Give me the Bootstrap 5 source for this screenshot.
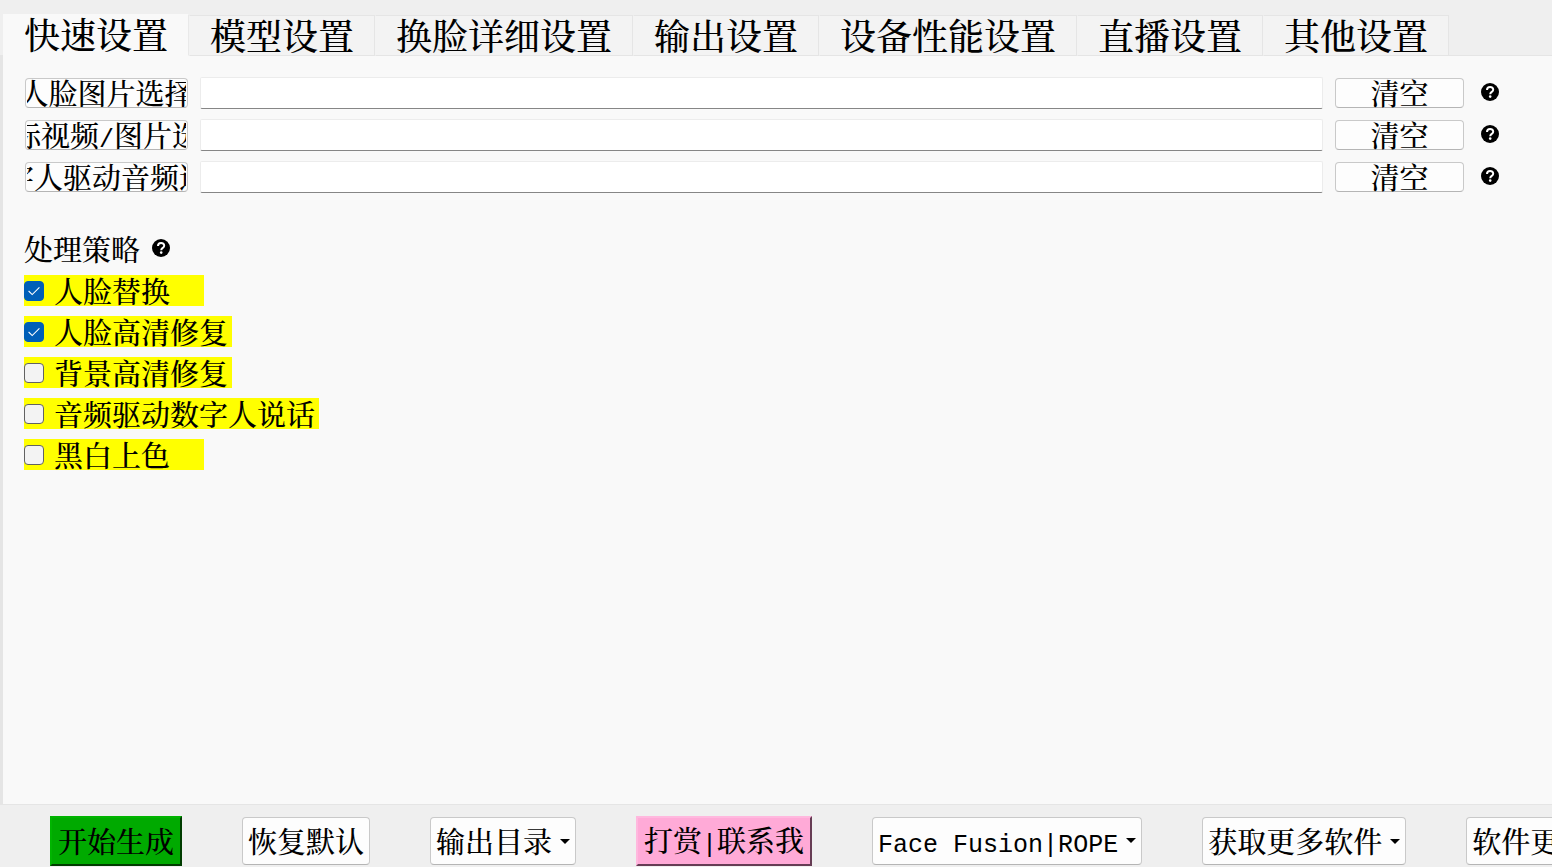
<!DOCTYPE html>
<html lang="zh-CN">
<head>
<meta charset="utf-8">
<meta name="viewport" content="width=device-width, initial-scale=1">
<title>快速设置</title>
<link href="https://cdn.jsdelivr.net/npm/bootstrap@5.3.0/dist/css/bootstrap.min.css" rel="stylesheet">
<style>
body{background:#efefef;color:#000;font-family:"Noto Serif CJK SC","Noto Sans CJK SC",serif;font-size:29px;font-weight:500;line-height:30px}
.half{font-family:"Liberation Mono",monospace;font-size:25px}
.top-tabs{padding:14px 0 0 3px;margin-bottom:-1px;border:0;z-index:1}
.top-tabs .nav-link{height:41px;padding:0 20px;margin:1px 0 0;border:1px solid #e5e5e5;border-left-color:transparent;border-radius:0;background:#f3f3f3;color:#000;font-size:36px;line-height:38px;white-space:nowrap}
.top-tabs .nav-link.active{height:42px;margin-top:0;background:#f9f9f9;color:#000;border-color:#f9f9f9;border-right-color:#e9e9e9}
.main-panel{background:#f9f9f9;border:1px solid #e5e5e5;border-width:1px 0 1px 3px;padding:21px 53px 0 21px;min-height:0}
.file-row{gap:12px;height:32px;margin-bottom:10px}
.soft-btn{background:#fdfdfd;color:#000;border:1px solid #c9c9c9;border-bottom-color:#b5b5b5;border-radius:4px;font-size:29px;font-weight:500;line-height:28px;padding:0;white-space:nowrap}
.soft-btn:hover{background:#f5f5f5;color:#000}
.pick-btn{width:163px;height:30px;padding:0 1px;margin-left:1px;flex:none}
.pick-btn .half{line-height:20px}
.clear-btn{width:129px;height:30px;flex:none}
.path-box{height:32px;min-width:0;background:#fff;border:1px solid #ececec;border-bottom-color:#868686;border-radius:2px;padding:0 6px;font-size:24px}
.help-mark{width:18px;height:18px;flex:none;margin-bottom:2px}
.file-row .help-mark{margin-left:5px}
.strategy{margin-top:41px}
.strategy-title{line-height:30px;margin-bottom:11px;gap:12px}
.options{gap:10px}
.option{height:31px;min-width:180px;padding-right:4px;background:#ff0;gap:10px;line-height:29px}
.option .form-check-input{width:20px;height:20px;margin:0;flex:none;border:1px solid #626262;border-radius:4px;background-color:#f3f3f3}
.option .form-check-input:checked{background-color:#005fb8;border-color:#005fb8;background-image:url("data:image/svg+xml,%3Csvg xmlns='http://www.w3.org/2000/svg' viewBox='0 0 20 20'%3E%3Cpath fill='none' stroke='%23fff' stroke-width='1.2' d='m4 10 4 4 8-8'/%3E%3C/svg%3E")}
.action-bar{gap:60px;padding:11px 0 1px 50px;overflow:hidden}
.action-bar .btn{flex:none;height:48px;font-size:29px;font-weight:500;line-height:44px;padding:0 5px;white-space:nowrap}
.action-bar .dropdown-toggle::after{margin-left:8px;vertical-align:9px;border-top:5px solid;border-left:5px solid transparent;border-right:5px solid transparent}
.action-bar .raised{height:50px;color:#000;border:2px solid;border-radius:0;padding:0 6px}
.action-bar .start{background:#00aa00;border-color:#00b400 #003c00 #003c00 #00b400}
.action-bar .donate{background:#ffaad7;border-color:#ffb8de #663c54 #663c54 #ffb8de}
</style>
</head>
<body class="vh-100 d-flex flex-column overflow-hidden">
<svg class="d-none" xmlns="http://www.w3.org/2000/svg">
<symbol id="help" viewBox="0 0 18 18"><circle cx="9" cy="9" r="9"/><path d="M6 7.1C6 2.9 12.2 3.1 12.2 6.7 12.2 8.9 9.2 8.9 9.2 11.2" fill="none" stroke="#fff" stroke-width="2"/><circle cx="9.2" cy="13.6" r="1.3" fill="#fff"/></symbol>
</svg>
<nav class="nav nav-tabs top-tabs flex-nowrap position-relative" aria-label="设置">
<a class="nav-link active" aria-current="page" href="#quick">快速设置</a>
<a class="nav-link" href="#model">模型设置</a>
<a class="nav-link" href="#swap">换脸详细设置</a>
<a class="nav-link" href="#output">输出设置</a>
<a class="nav-link" href="#device">设备性能设置</a>
<a class="nav-link" href="#live">直播设置</a>
<a class="nav-link" href="#other">其他设置</a>
</nav>
<main class="main-panel flex-grow-1 overflow-hidden" id="quick">
<div class="file-row d-flex align-items-center">
<button class="btn soft-btn pick-btn" type="button" id="face"><span class="d-flex justify-content-center overflow-hidden"><span>人脸图片选择</span></span></button>
<input class="form-control path-box flex-fill w-auto" type="text" aria-labelledby="face">
<button class="btn soft-btn clear-btn" type="button">清空</button>
<svg class="help-mark"><use href="#help"/></svg>
</div>
<div class="file-row d-flex align-items-center">
<button class="btn soft-btn pick-btn" type="button" id="target"><span class="d-flex justify-content-center overflow-hidden"><span>目标视频<span class="half">/</span>图片选择</span></span></button>
<input class="form-control path-box flex-fill w-auto" type="text" aria-labelledby="target">
<button class="btn soft-btn clear-btn" type="button">清空</button>
<svg class="help-mark"><use href="#help"/></svg>
</div>
<div class="file-row d-flex align-items-center">
<button class="btn soft-btn pick-btn" type="button" id="audio"><span class="d-flex justify-content-center overflow-hidden"><span>数字人驱动音频选择</span></span></button>
<input class="form-control path-box flex-fill w-auto" type="text" aria-labelledby="audio">
<button class="btn soft-btn clear-btn" type="button">清空</button>
<svg class="help-mark"><use href="#help"/></svg>
</div>
<section class="strategy">
<div class="strategy-title d-flex align-items-center"><span>处理策略</span><svg class="help-mark"><use href="#help"/></svg></div>
<div class="options d-flex flex-column align-items-start">
<label class="option d-flex align-items-center"><input class="form-check-input" type="checkbox" checked>人脸替换</label>
<label class="option d-flex align-items-center"><input class="form-check-input" type="checkbox" checked>人脸高清修复</label>
<label class="option d-flex align-items-center"><input class="form-check-input" type="checkbox">背景高清修复</label>
<label class="option d-flex align-items-center"><input class="form-check-input" type="checkbox">音频驱动数字人说话</label>
<label class="option d-flex align-items-center"><input class="form-check-input" type="checkbox">黑白上色</label>
</div>
</section>
</main>
<footer class="action-bar d-flex align-items-center">
<button class="btn raised start" type="button">开始生成</button>
<button class="btn soft-btn" type="button">恢复默认</button>
<button class="btn soft-btn dropdown-toggle" type="button">输出目录</button>
<button class="btn raised donate" type="button">打赏<span class="half">|</span>联系我</button>
<button class="btn soft-btn dropdown-toggle" type="button"><span class="half">Face Fusion|ROPE</span></button>
<button class="btn soft-btn dropdown-toggle" type="button">获取更多软件</button>
<button class="btn soft-btn" type="button">软件更新</button>
</footer>
<script src="https://cdn.jsdelivr.net/npm/bootstrap@5.3.0/dist/js/bootstrap.bundle.min.js"></script>
</body>
</html>
